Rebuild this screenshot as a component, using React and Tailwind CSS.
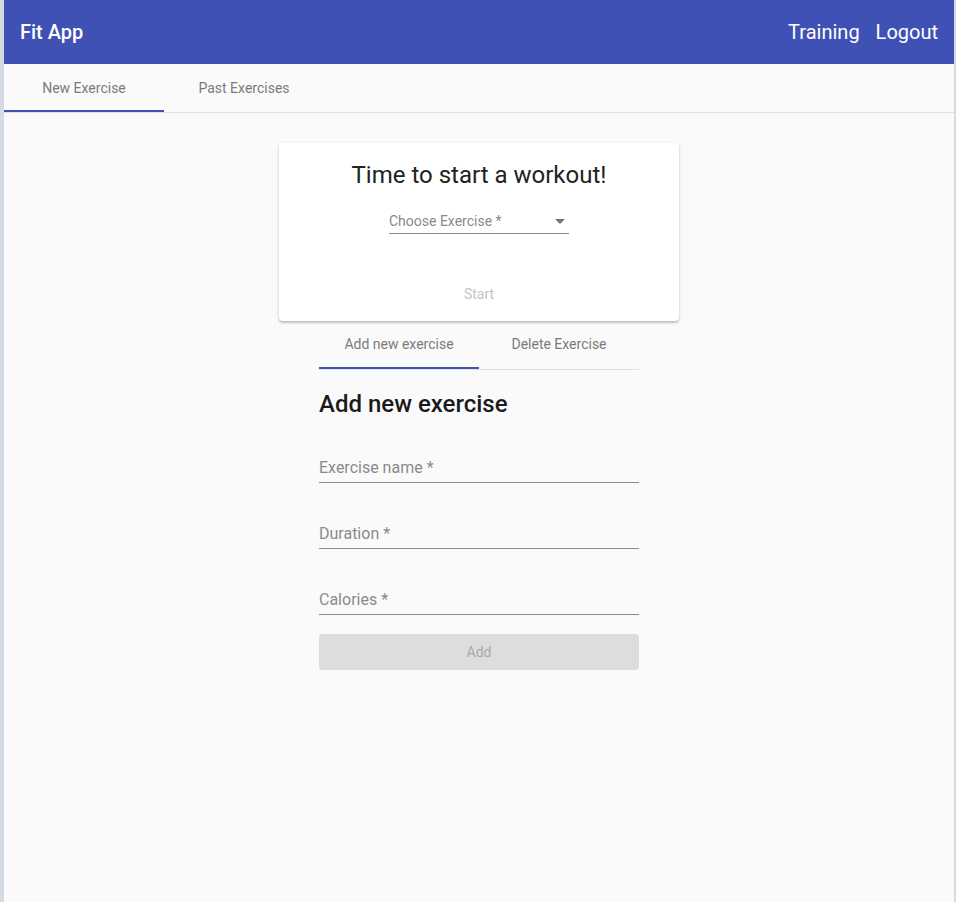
import { useState } from 'react'

function Field({ label }) {
  return (
    <div className="pt-[18px] pb-[15px]">
      <div className="h-[33px] flex items-end border-b border-[#8a8a8a] pb-[6px]">
        <span className="text-[16px] text-[#8a8a8a] leading-none">{label}</span>
      </div>
    </div>
  )
}

export default function App() {
  const [tab, setTab] = useState(0)
  const [inner, setInner] = useState(0)

  return (
    <div className="min-h-[902px] bg-[#d5dbe5] pr-[2px] pl-[4px] font-['Roboto',sans-serif]">
      <div className="min-h-[902px] bg-[#fafafa] flex flex-col">
        {/* Toolbar */}
        <header className="h-[64px] bg-[#3f51b5] text-white flex items-center justify-between px-[16px]">
          <span className="text-[20px] font-medium">Fit App</span>
          <nav className="flex items-center gap-[16px] text-[20px]">
            <span>Training</span>
            <span>Logout</span>
          </nav>
        </header>

        {/* Main tabs */}
        <div className="flex border-b border-[#e0e0e0] h-[49px]">
          {['New Exercise', 'Past Exercises'].map((t, i) => (
            <button
              key={t}
              onClick={() => setTab(i)}
              className={`w-[160px] h-[48px] pt-[2px] text-[14px] text-[#7a7a7a] flex items-center justify-center border-b-2 ${
                tab === i ? 'border-[#3f51b5]' : 'border-transparent'
              }`}
            >
              {t}
            </button>
          ))}
        </div>

        {/* Content */}
        <div className="flex flex-col items-center pt-[30px]">
          <div className="w-[400px] h-[178px] bg-white rounded-[4px] shadow-[0_2px_2px_rgba(0,0,0,0.18),0_1px_4px_rgba(0,0,0,0.1)] flex flex-col items-center pt-[16px]">
            <h1 className="text-[24px] text-[#222] leading-[32px]">Time to start a workout!</h1>
            <div className="mt-[19px] w-[180px] h-[24px] border-b border-[#8a8a8a] flex items-center justify-between">
              <span className="text-[14px] text-[#8a8a8a]">Choose Exercise *</span>
              <svg width="10" height="5" viewBox="0 0 10 5" className="mr-[4px]">
                <path d="M0 0 L10 0 L5 5 Z" fill="#757575" />
              </svg>
            </div>
            <button className="mt-[50px] text-[14px] text-[#c4c4c4]">Start</button>
          </div>

          <div className="w-[320px]">
            <div className="flex border-b border-[#e0e0e0] h-[49px]">
              {['Add new exercise', 'Delete Exercise'].map((t, i) => (
                <button
                  key={t}
                  onClick={() => setInner(i)}
                  className={`w-[160px] h-[48px] text-[14px] text-[#7a7a7a] flex items-center justify-center border-b-2 ${
                    inner === i ? 'border-[#3f51b5]' : 'border-transparent'
                  }`}
                >
                  {t}
                </button>
              ))}
            </div>

            <h2 className="mt-[18px] text-[24px] font-medium text-[#1a1a1a] leading-[32px]">Add new exercise</h2>

            <div className="mt-[12px]">
              <Field label="Exercise name *" />
              <Field label="Duration *" />
              <Field label="Calories *" />
            </div>

            <button className="mt-[4px] w-full h-[36px] rounded-[4px] bg-[#dddddd] text-[14px] text-[#a9a9a9]">Add</button>
          </div>
        </div>
      </div>
    </div>
  )
}
